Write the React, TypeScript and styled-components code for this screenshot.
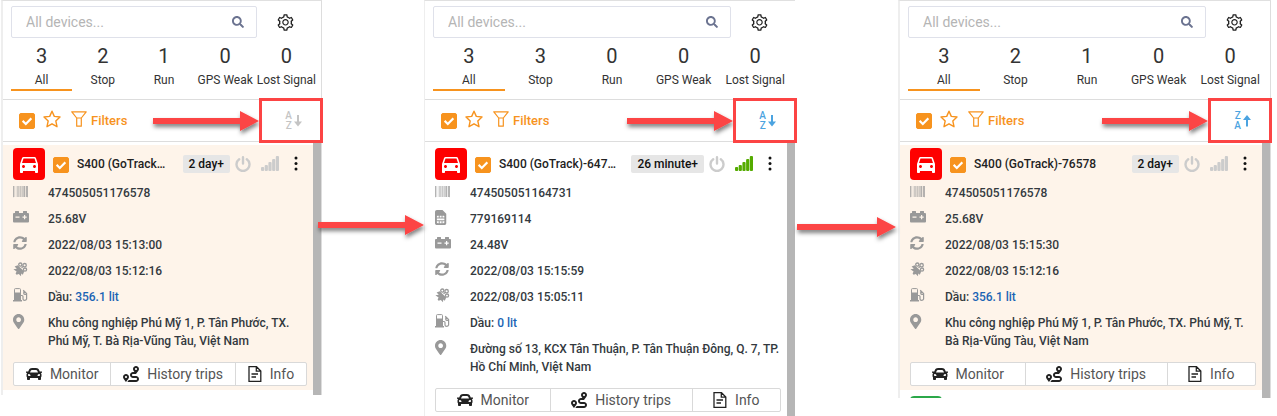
import React, { useState } from "react";
import styled, { createGlobalStyle } from "styled-components";
import { FaSearch, FaBarcode, FaSimCard, FaMapMarkerAlt, FaCar, FaRoute, FaSyncAlt } from "react-icons/fa";
import { AiOutlineSetting } from "react-icons/ai";
import { MdDirectionsCar } from "react-icons/md";

const ORANGE = "#f7931e";
const RED = "#fc4444";

const GlobalStyle = createGlobalStyle`
  * { box-sizing: border-box; }
  body { margin: 0; background: #fff; color: #333; font: 12px/18px Roboto, sans-serif; }
  button, input { font: inherit; color: inherit; }
  button { padding: 0; border: 0; background: none; cursor: pointer; }
  svg { display: block; flex: none; }
`;

const Page = styled.main`
  display: grid;
  grid-template-columns: 321fr 102fr 371fr 103fr 373fr;
  align-items: start;
  padding: 0 6px 0 1px;
`;

const Panel = styled.section<{ $framed: boolean }>`
  min-width: 0;
  border-top: 1px solid #e0e0e0;
  border-left: ${(p) => (p.$framed ? 2 : 1)}px solid #eee;
  border-right: ${(p) => (p.$framed ? 1 : 0)}px solid #ddd;
`;

const SearchRow = styled.div`
  display: flex;
  align-items: center;
  padding: 5px 4px 0 8px;
`;

const SearchBox = styled.label`
  display: flex;
  align-items: center;
  flex: 1;
  min-width: 0;
  height: 32px;
  padding: 0 12px 0 14px;
  border: 1px solid #dfe1ea;
  border-radius: 2px;
  color: #6b7390;
`;

const SearchInput = styled.input`
  flex: 1;
  min-width: 0;
  border: 0;
  outline: 0;
  padding: 0;
  background: none;
  font-size: 14px;
  &::placeholder { color: #b5b5b5; opacity: 1; }
`;

const GearButton = styled.button`
  display: flex;
  justify-content: center;
  width: 60px;
  padding-right: 4px;
  color: #222;
`;

const Tabs = styled.div`
  display: grid;
  grid-template-columns: repeat(5, 1fr);
  margin: 4px 4px 8px 8px;
`;

const Tab = styled.button<{ $active: boolean }>`
  display: flex;
  flex-direction: column;
  align-items: center;
  gap: 1px;
  height: 49px;
  border-bottom: 2px solid ${(p) => (p.$active ? ORANGE : "transparent")};
  white-space: nowrap;
`;

const Count = styled.span`
  font-size: 20px;
  line-height: 28px;
`;

const Toolbar = styled.div`
  position: relative;
  display: flex;
  align-items: center;
  height: 43px;
  padding: 0 19px 0 16px;
  border: 1px solid #ddd;
  border-width: 1px 0;
  color: ${ORANGE};
`;

const StarButton = styled.button`
  margin: 0 10px 4px 8px;
`;

const FilterButton = styled.button`
  display: flex;
  align-items: center;
  gap: 4px;
  font-weight: 500;
  font-size: 13px;
  svg { margin-bottom: 4px; }
`;

const SortButton = styled.button<{ $on: boolean }>`
  display: flex;
  align-items: center;
  gap: 2px;
  margin-left: auto;
  color: ${(p) => (p.$on ? "#4ba3e0" : "#c4c4c4")};
`;

const Letters = styled.span`
  display: flex;
  flex-direction: column;
  align-items: center;
  font-size: 10px;
  line-height: 10px;
  font-weight: 500;
`;

const Callout = styled.div`
  position: absolute;
  top: -2px;
  right: -2px;
  width: 64px;
  height: 45px;
  border: 3px solid ${RED};
  pointer-events: none;
`;

const CalloutArrow = styled.div`
  position: absolute;
  top: 8px;
  right: 62px;
  pointer-events: none;
`;

const Connector = styled.div<{ $top: number; $left: number }>`
  position: relative;
  z-index: 1;
  margin: ${(p) => p.$top}px 0 0 ${(p) => p.$left}px;
`;

const Scroller = styled.div<{ $height?: number }>`
  height: ${(p) => (p.$height ? p.$height + "px" : "auto")};
  overflow: hidden;
  padding-top: 3px;
  padding-bottom: 5px;
  border-right: 8px solid #b6b6b6;
`;

const Card = styled.article<{ $tinted: boolean }>`
  padding: 3px 6px 4px 10px;
  background: ${(p) => (p.$tinted ? "#fef4ea" : "#fff")};
`;

const CardHead = styled.header`
  display: flex;
  align-items: center;
  height: 32px;
  color: #222;
`;

const Avatar = styled.span<{ $color: string }>`
  display: flex;
  align-items: center;
  justify-content: center;
  flex: none;
  width: 32px;
  height: 32px;
  border-radius: 4px;
  background: ${(p) => p.$color};
  color: #fff;
`;

const Name = styled.h2`
  flex: 1;
  min-width: 0;
  margin: 0 15px 0 8px;
  overflow: hidden;
  text-overflow: ellipsis;
  white-space: nowrap;
  font-size: 12px;
  line-height: 18px;
  font-weight: 500;
`;

const Age = styled.span`
  padding: 0 6px;
  border-radius: 2px;
  background: #e6e6e6;
  color: #111;
  font-weight: 500;
  white-space: nowrap;
`;

const IconButton = styled.button<{ $gap: number }>`
  margin-left: ${(p) => p.$gap}px;
  color: #ccc;
`;

const MenuButton = styled.button`
  display: flex;
  justify-content: center;
  width: 22px;
  margin-left: 6px;
  color: #111;
`;

const Facts = styled.ul`
  margin: 0;
  padding: 0;
  list-style: none;
`;

const Fact = styled.li`
  display: grid;
  grid-template-columns: 15px 1fr;
  gap: 20px;
  padding: 4px 0;
  color: #33393e;
  font-weight: 500;
  > svg { color: #999; }
`;

const Fuel = styled.a`
  color: #1a63b4;
  text-decoration: none;
`;

const Actions = styled.div`
  display: flex;
  margin-top: 8px;
  border: 1px solid #d9d9d9;
  border-radius: 2px;
  background: #fff;
`;

const Action = styled.button`
  display: flex;
  align-items: center;
  justify-content: center;
  flex: 1 1 auto;
  gap: 8px;
  height: 22px;
  padding: 0 11px;
  color: #555;
  font-size: 14px;
  white-space: nowrap;
  & + & { border-left: 1px solid #d9d9d9; }
  svg { color: #222; }
`;

const TickBox = styled.span`
  position: relative;
  display: flex;
  flex: none;
  width: 16px;
  height: 16px;
  svg { position: absolute; left: 3px; top: 3px; color: #fff; pointer-events: none; }
`;

const TickInput = styled.input`
  appearance: none;
  width: 16px;
  height: 16px;
  margin: 0;
  border-radius: 2px;
  border: 1px solid ${ORANGE};
  &:checked { background: ${ORANGE}; }
`;

const CardTick = styled.span`
  display: flex;
  margin: 2px 0 0 8px;
`;

const NextAvatar = styled.div`
  width: 32px;
  height: 32px;
  margin: 6px 0 0 10px;
  border-radius: 4px;
  background: #2ba84a;
`;

const ArrowSvg = styled.svg`
  overflow: visible;
`;

function Tick({ label }: { label: string }) {
  const [on, setOn] = useState(true);
  return (
    <TickBox>
      <TickInput type="checkbox" aria-label={label} checked={on} onChange={() => setOn(!on)} />
      <svg width="10" height="10" viewBox="0 0 10 10" fill="none" stroke="currentColor" strokeWidth="2.2">
        <path d="M.6 4.800L3.800 8 9.400 2.300" />
      </svg>
    </TickBox>
  );
}

function ArrowDrawing({ length, id }: { length: number; id: string }) {
  return (
    <ArrowSvg width={length} height="26" viewBox={`0 0 ${length} 26`}>
      <defs>
        <filter id={id} x="-10%" y="-30%" width="120%" height="190%">
          <feDropShadow dx="1" dy="3" stdDeviation="2" floodColor="#000" floodOpacity="0.5" />
        </filter>
      </defs>
      <path
        filter={`url(#${id})`}
        fill={RED}
        d={`M0 10H${length - 19}V3L${length} 13L${length - 19} 23V16H0Z`}
      />
    </ArrowSvg>
  );
}

function Star() {
  return (
    <svg width="18" height="18" viewBox="0 0 18 18" fill="none" stroke="currentColor" strokeWidth="1.4" strokeLinejoin="round">
      <path d="M9 1.2l2.300 5.200 5.700.6-4.200 3.900 1.200 5.800L9 13.800 4 16.700l1.200-5.800L1 7l5.700-.6z" />
    </svg>
  );
}

function Funnel() {
  return (
    <svg width="16" height="16" viewBox="0 0 16 16" fill="none" stroke="currentColor" strokeWidth="1.2" strokeLinejoin="round">
      <path d="M.8 .8h14.400L10.300 7v8.200H5.700V7zM5.700 7h4.600" />
    </svg>
  );
}

function SortArrow({ up }: { up: boolean }) {
  return (
    <svg width="8" height="12" viewBox="0 0 8 12">
      <path fill="currentColor" d={up ? "M4 0l4 5H5V11.500H3V5H0z" : "M4 11.500l4-5H5V0H3v6.500H0z"} />
    </svg>
  );
}

function Power() {
  return (
    <svg width="16" height="16" viewBox="0 0 16 16" fill="none" stroke="currentColor" strokeWidth="2.4" strokeLinecap="round">
      <path d="M8 1.200V7.500M4.200 3.200A6.500 6.500 0 1 0 11.800 3.200" />
    </svg>
  );
}

function Battery() {
  return (
    <svg width="16" height="13" viewBox="0 0 16 13">
      <path
        fill="currentColor"
        fillRule="evenodd"
        d="M2 1.500Q2 1 2.500 1h3q.5 0 .5.500V3h4V1.500q0-.5.5-.5h3q.5 0 .5.500V3h1q1 0 1 1v7.500q0 1-1 1H1q-1 0-1-1V4q0-1 1-1h1zM2.500 6.500v1.200h4V6.500zM11 5v1.500H9.500v1.200H11v1.500h1.200V7.700h1.500V6.500h-1.500V5z"
      />
    </svg>
  );
}

function Signal({ on }: { on: boolean }) {
  return (
    <svg width="18" height="16" viewBox="0 0 18 16" fill={on ? "#54ab00" : "#ccc"}>
      <rect x="0" y="11" width="3.2" height="4" rx="1" />
      <rect x="3.700" y="9" width="3.200" height="6" rx="1" />
      <rect x="7.400" y="6" width="3.200" height="9" rx="1" />
      <rect x="11.100" y="3" width="3.200" height="12" rx="1" />
      <rect x="14.800" y="0" width="3.200" height="15" rx="1" />
    </svg>
  );
}

function Dots() {
  return (
    <svg width="4" height="16" viewBox="0 0 4 16" fill="currentColor">
      <circle cx="2" cy="2" r="1.500" />
      <circle cx="2" cy="7.500" r="1.500" />
      <circle cx="2" cy="13" r="1.500" />
    </svg>
  );
}

function Satellite() {
  return (
    <svg width="15" height="15" viewBox="0 0 15 15" fill="currentColor">
      <path d="M4.800 3.200L11.200 9.600 9.800 12.800 8.200 11.400 8 14.200 5.800 12 3.600 12.800 2.600 11.600 3.600 9.600 .4 7.200 3.800 6.800 1.600 4.600z" />
      <g fill="none" stroke="currentColor" strokeWidth="1.300">
        <circle cx="7.300" cy="2.600" r="1.600" />
        <circle cx="11.600" cy="3.200" r="1.700" />
        <circle cx="12" cy="7.600" r="1.600" />
        <path d="M8.500 5.800l2-1.500" />
      </g>
    </svg>
  );
}

function Pump() {
  return (
    <svg width="15" height="14" viewBox="0 0 15 14">
      <path fill="none" stroke="currentColor" strokeWidth="1" d="M1.500 6V1.500Q1.500.6 2.400.6h4.200q.9 0 .9.900V6" />
      <path fill="currentColor" d="M1 4.500h7v7.500H1zM0 12h9v1.500H0z" />
      <path fill="none" stroke="currentColor" strokeWidth="1.200" d="M8 7.500h1q1 0 1 1V11q0 1.300 1.600 1.300T13.600 11V5.500L10.200 2.300M10.800 3.500v2q0 1 2.500 1" />
    </svg>
  );
}

function Document() {
  return (
    <svg width="14" height="16" viewBox="0 0 14 16" fill="none" stroke="currentColor" strokeWidth="1.300">
      <path d="M1 .7h7.500L12.800 5v10.300H1zM8.300 1v4.200h4.300M3.500 8h6.500M3.500 11h4.500" />
    </svg>
  );
}

type Device = {
  name: string;
  age: string;
  online: boolean;
  imei: string;
  sim?: string;
  volt: string;
  updated: string;
  located: string;
  fuel: string;
  address: string;
};

function DeviceCard({ d }: { d: Device }) {
  return (
    <Card $tinted={!d.online}>
      <CardHead>
        <Avatar $color="#fe0000">
          <MdDirectionsCar size={24} />
        </Avatar>
        <CardTick>
          <Tick label={d.name} />
        </CardTick>
        <Name>{d.name}</Name>
        <Age>{d.age}</Age>
        <IconButton $gap={5} aria-label="Power">
          <Power />
        </IconButton>
        <IconButton $gap={10} aria-label="Signal">
          <Signal on={d.online} />
        </IconButton>
        <MenuButton aria-label="More">
          <Dots />
        </MenuButton>
      </CardHead>
      <Facts>
        <Fact><FaBarcode size={15} />{d.imei}</Fact>
        {d.sim && <Fact><FaSimCard size={15} preserveAspectRatio="xMinYMid" />{d.sim}</Fact>}
        <Fact><Battery />{d.volt}</Fact>
        <Fact><FaSyncAlt size={14} />{d.updated}</Fact>
        <Fact><Satellite />{d.located}</Fact>
        <Fact><Pump /><span>Dầu: <Fuel href="#fuel">{d.fuel}</Fuel></span></Fact>
        <Fact><FaMapMarkerAlt size={15} preserveAspectRatio="xMinYMid" />{d.address}</Fact>
      </Facts>
      <Actions>
        <Action><FaCar size={16} />Monitor</Action>
        <Action><FaRoute size={16} />History trips</Action>
        <Action><Document />Info</Action>
      </Actions>
    </Card>
  );
}

type PanelProps = {
  id: string;
  framed: boolean;
  counts: number[];
  sort: "off" | "asc" | "desc";
  device: Device;
  height?: number;
};

const TAB_NAMES = ["All", "Stop", "Run", "GPS Weak", "Lost Signal"];

function DevicePanel({ id, framed, counts, sort, device, height }: PanelProps) {
  const letters = sort === "desc" ? ["Z", "A"] : ["A", "Z"];
  return (
    <Panel $framed={framed}>
      <SearchRow>
        <SearchBox>
          <SearchInput placeholder="All devices..." aria-label="All devices" />
          <FaSearch size={12} />
        </SearchBox>
        <GearButton aria-label="Settings">
          <AiOutlineSetting size={19} />
        </GearButton>
      </SearchRow>
      <Tabs>
        {TAB_NAMES.map((name, i) => (
          <Tab key={name} $active={i === 0}>
            <Count>{counts[i]}</Count>
            {name}
          </Tab>
        ))}
      </Tabs>
      <Toolbar>
        <Tick label="Select all" />
        <StarButton aria-label="Favourites"><Star /></StarButton>
        <FilterButton><Funnel />Filters</FilterButton>
        <SortButton $on={sort !== "off"} aria-label="Sort">
          <Letters>
            <span>{letters[0]}</span>
            <span>{letters[1]}</span>
          </Letters>
          <SortArrow up={sort === "desc"} />
        </SortButton>
        <CalloutArrow><ArrowDrawing length={106} id={id} /></CalloutArrow>
        <Callout />
      </Toolbar>
      <Scroller $height={height}>
        <DeviceCard d={device} />
        {height && <NextAvatar />}
      </Scroller>
    </Panel>
  );
}

const GO_ADDRESS = "Khu công nghiệp Phú Mỹ 1, P. Tân Phước, TX. Phú Mỹ, T. Bà Rịa-Vũng Tàu, Việt Nam";

const FIRST: Device = {
  name: "S400 (GoTrack)-76578",
  age: "2 day+",
  online: false,
  imei: "474505051176578",
  volt: "25.68V",
  updated: "2022/08/03 15:13:00",
  located: "2022/08/03 15:12:16",
  fuel: "356.1 lit",
  address: GO_ADDRESS,
};

const SECOND: Device = {
  name: "S400 (GoTrack)-64731",
  age: "26 minute+",
  online: true,
  imei: "474505051164731",
  sim: "779169114",
  volt: "24.48V",
  updated: "2022/08/03 15:15:59",
  located: "2022/08/03 15:05:11",
  fuel: "0 lit",
  address: "Đường số 13, KCX Tân Thuận, P. Tân Thuận Đông, Q. 7, TP. Hồ Chí Minh, Việt Nam",
};

const THIRD: Device = { ...FIRST, updated: "2022/08/03 15:15:30" };

export default function App() {
  return (
    <>
      <GlobalStyle />
      <Page>
        <DevicePanel id="a1" framed counts={[3, 2, 1, 0, 0]} sort="off" device={FIRST} />
        <Connector $top={212} $left={-4}><ArrowDrawing length={106} id="c1" /></Connector>
        <DevicePanel id="a2" framed={false} counts={[3, 3, 0, 0, 0]} sort="asc" device={SECOND} />
        <Connector $top={214} $left={2}><ArrowDrawing length={99} id="c2" /></Connector>
        <DevicePanel id="a3" framed counts={[3, 2, 1, 0, 0]} sort="desc" device={THIRD} height={256} />
      </Page>
    </>
  );
}
